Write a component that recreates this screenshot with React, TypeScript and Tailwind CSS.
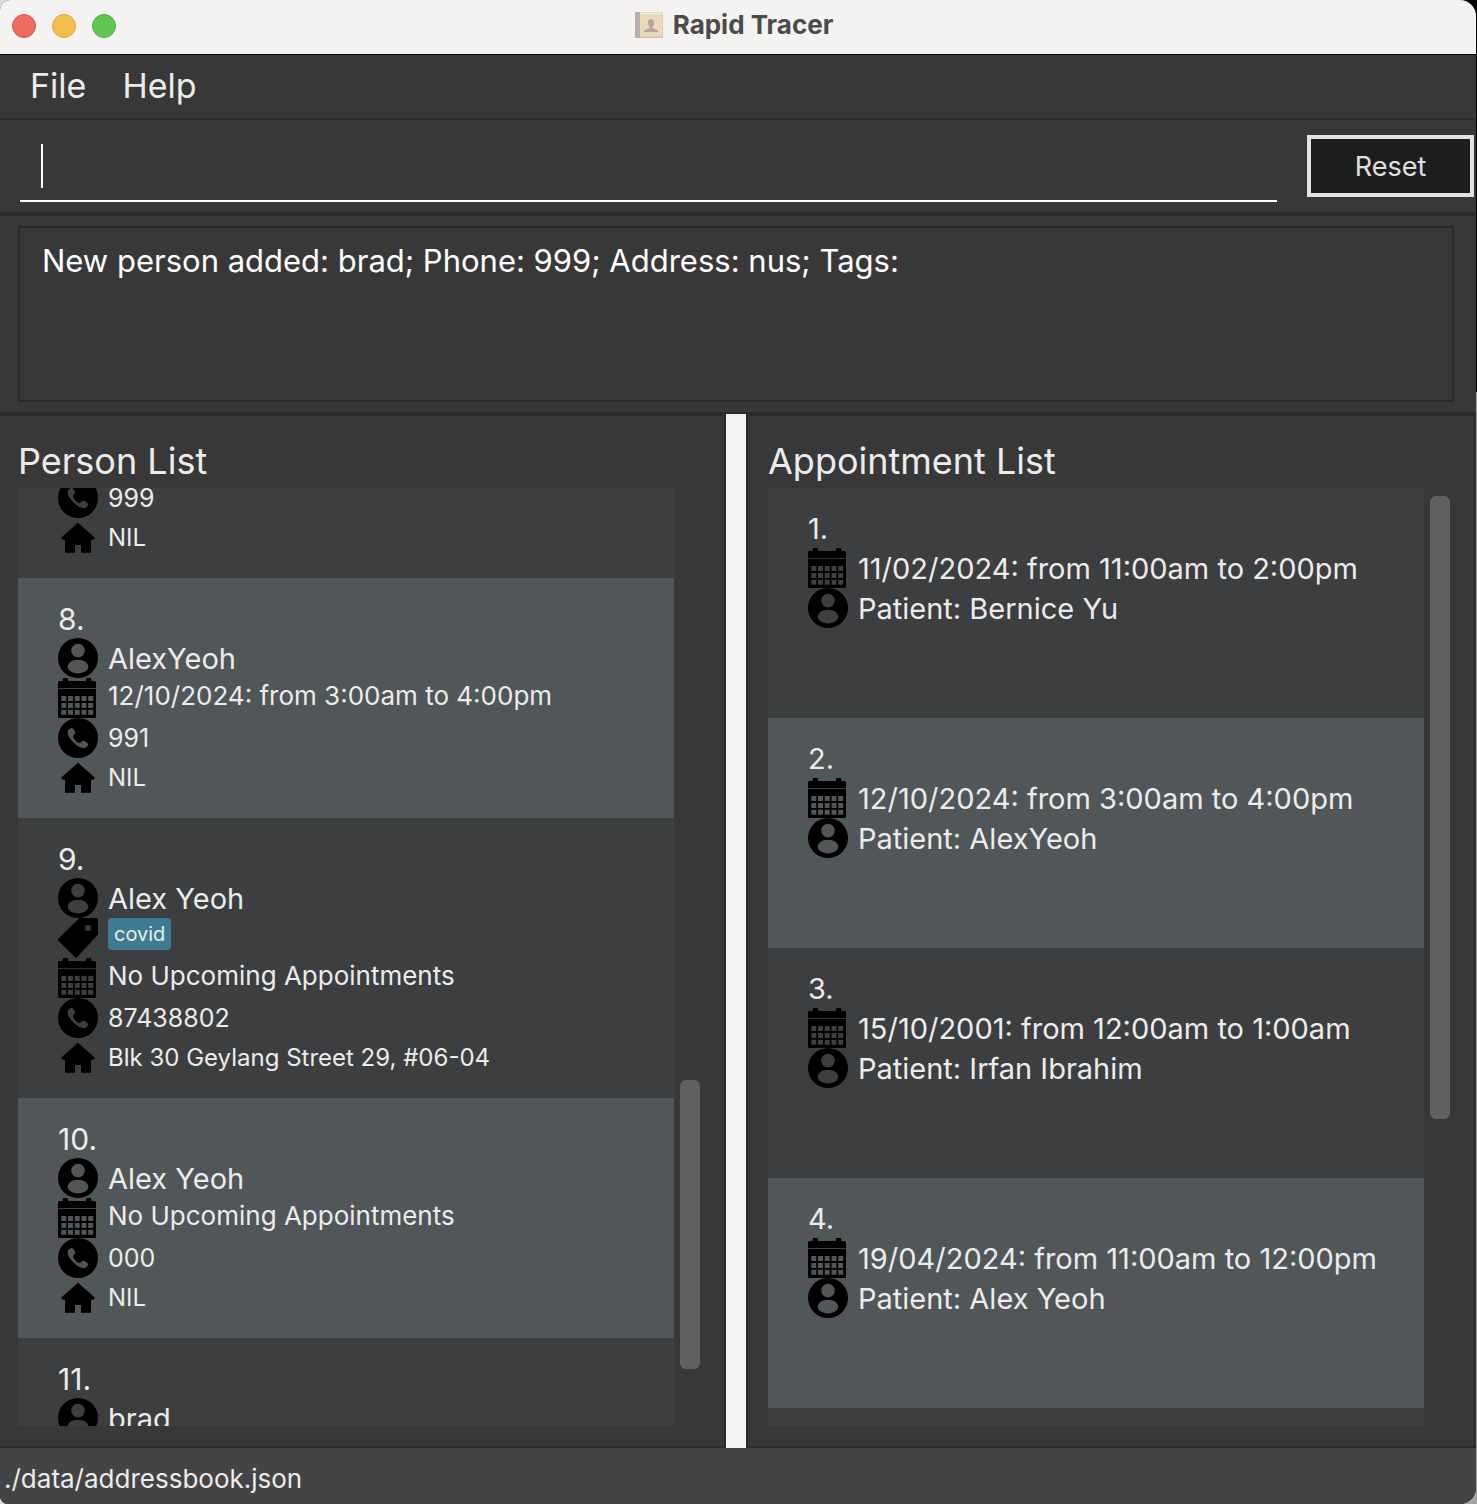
import React from "react";

type IconName = "person" | "calendar" | "phone" | "home" | "tag";

const iconPaths: Record<IconName, string> = {
  person:
    "M20 0a20 20 0 1 0 0 40a20 20 0 1 0 0-40zM20 5.800a6.800 6.800 0 1 1 0 13.600a6.800 6.800 0 1 1 0-13.600zM20 21.800c6.500 0 10.300 3.400 10.300 7c0 3.600-4.600 6.600-10.300 6.600s-10.300-3-10.300-6.600c0-3.600 3.800-7 10.300-7z",
  calendar:
    "M0 4.500q0-1.500 1.500-1.500h3.200v-2q0-1 1-1h3.300q1 0 1 1v2h18v-2q0-1 1-1h3.300q1 0 1 1v2h3.200q1.500 0 1.500 1.500v5.700h-38zM0 11.100h38v27.400q0 1.500-1.500 1.500h-35q-1.500 0-1.500-1.500zM3.300 18v5h5v-5zM10 18v5h5v-5zM16.700 18v5h5v-5zM23.500 18v5h5v-5zM30.200 18v5h5v-5zM3.300 25v5h5v-5zM10 25v5h5v-5zM16.700 25v5h5v-5zM23.500 25v5h5v-5zM30.200 25v5h5v-5zM3.300 31.700v5h5v-5zM10 31.700v5h5v-5zM16.700 31.700v5h5v-5zM23.500 31.700v5h5v-5zM30.200 31.700v5h5v-5z",
  phone:
    "M20 0a20 20 0 1 0 0 40a20 20 0 1 0 0-40zM10 12.600C11 11.300 13 9.600 14 10.100C15.500 10.800 17 13 17.300 14.500C17.300 16 15 17 15 18.500C15.500 21 19 24.500 21.500 25C23 25 24 22.600 25.500 22.800C27 23 29.500 25 30 26C30.500 27 29 29 27.500 29.800C25 31 20 29 16 25C11.500 20.500 8.500 16 10 12.600Z",
  home: "M20 4.700L37 19.800L35.300 21.700H33V34.700H23V27H17V34.700H7V21.700H4.700L3 19.800Z",
  tag: "M21.500 0H37.500Q40 0 40 2.500V16.500L19.200 39Q18 40.300 16.800 39L.5 22.700Q-.5 21.500 .5 20.500ZM30 7a3 3 0 1 0 0 6a3 3 0 1 0 0-6z",
};

function Icon({ name }: { name: IconName }) {
  return (
    <svg viewBox="0 0 40 40" className="size-10 shrink-0 fill-black" aria-hidden="true">
      <path fillRule="evenodd" d={iconPaths[name]} />
    </svg>
  );
}

function Row({ icon, children }: { icon: IconName; children: React.ReactNode }) {
  return (
    <div className="flex h-10 gap-2.5 whitespace-nowrap">
      <Icon name={icon} />
      {children}
    </div>
  );
}

type Person = {
  index?: number;
  name?: string;
  tag?: string;
  appointment?: string;
  phone?: string;
  address?: string;
};

const people: Person[] = [
  { phone: "999", address: "NIL" },
  { index: 8, name: "AlexYeoh", appointment: "12/10/2024: from 3:00am to 4:00pm", phone: "991", address: "NIL" },
  {
    index: 9,
    name: "Alex Yeoh",
    tag: "covid",
    appointment: "No Upcoming Appointments",
    phone: "87438802",
    address: "Blk 30 Geylang Street 29, #06-04",
  },
  { index: 10, name: "Alex Yeoh", appointment: "No Upcoming Appointments", phone: "000", address: "NIL" },
  { index: 11, name: "brad" },
];

const appointments = [
  { index: 1, time: "11/02/2024: from 11:00am to 2:00pm", patient: "Bernice Yu" },
  { index: 2, time: "12/10/2024: from 3:00am to 4:00pm", patient: "AlexYeoh" },
  { index: 3, time: "15/10/2001: from 12:00am to 1:00am", patient: "Irfan Ibrahim" },
  { index: 4, time: "19/04/2024: from 11:00am to 12:00pm", patient: "Alex Yeoh" },
];

function PersonCard({ person }: { person: Person }) {
  return (
    <li className="bg-[#3c3e3f] px-10 pb-5 even:bg-[#515658]">
      {person.index && <div className="pt-5 text-[30px] leading-[42px] -mb-0.5">{person.index}.</div>}
      {person.name && (
        <Row icon="person">
          <span className="text-[29px] leading-[42px]">{person.name}</span>
        </Row>
      )}
      {person.tag && (
        <Row icon="tag">
          <span className="h-8 rounded-sm bg-[#3e7b91] px-1.5 text-[20px] leading-8">{person.tag}</span>
        </Row>
      )}
      {person.appointment && (
        <Row icon="calendar">
          <span className="text-[26px] leading-9">{person.appointment}</span>
        </Row>
      )}
      {person.phone && (
        <Row icon="phone">
          <span className="text-[25px] leading-10">{person.phone}</span>
        </Row>
      )}
      {person.address && (
        <Row icon="home">
          <span className="text-[24px] leading-10">{person.address}</span>
        </Row>
      )}
    </li>
  );
}

export default function App() {
  return (
    <div className="h-screen bg-[linear-gradient(90deg,#d8d8d8_20px,transparent_20px),linear-gradient(#000_392px,#a5a5a5_392px)] pr-px font-['Inter',sans-serif] text-[#ececec]">
      <div className="flex h-full flex-col overflow-hidden rounded-tl-[10px] rounded-tr-2xl rounded-br-2xl rounded-bl-lg bg-[#383838]">
        <header className="relative flex h-[55px] shrink-0 items-center justify-center gap-2.5 border-b border-black bg-[#f4f3f1] pr-2 pb-1">
          <div className="absolute top-3.5 left-3 flex gap-4">
            <button aria-label="Close" className="size-6 rounded-full border border-[#d8574c] bg-[#ed6a5f]" />
            <button aria-label="Minimize" className="size-6 rounded-full border border-[#dca23c] bg-[#f5bf4f]" />
            <button aria-label="Zoom" className="size-6 rounded-full border border-[#4fab3e] bg-[#62c655]" />
          </div>
          <svg viewBox="0 0 28 26" className="h-[26px] w-7" aria-hidden="true">
            <rect width="28" height="26" rx="1" fill="#cfc5b3" />
            <rect x="5" y="1.500" width="22.500" height="23" fill="#e9dabb" />
            <rect x="5" y="0.500" width="22.500" height="1.500" fill="#f4efe4" />
            <rect width="5" height="26" rx="1" fill="#b9b0ae" />
            <path d="M9 20v-1.200c1.500-1.500 4-1.600 5.200-2.600v-1.700c-.8-1-1.200-2.500-1.200-3.900c0-2.200 1.200-3.600 3-3.600s3 1.400 3 3.600c0 1.400-.4 2.900-1.200 3.900v1.700c1.200 1 3.700 1.100 5.200 2.600v1.200z" fill="#b3aa9b" />
          </svg>
          <h1 className="text-[26px] leading-8 font-bold text-[#4b4b49]">Rapid Tracer</h1>
        </header>

        <nav className="flex h-[65px] shrink-0 items-center gap-9 border-b-2 border-[#2b2b2b] px-[30px] pb-0.5 text-[34px]">
          <button>File</button>
          <button>Help</button>
        </nav>

        <form className="flex h-24 shrink-0 items-start border-b-4 border-[#2b2b2b] pr-0.5 pl-5" onSubmit={(e) => e.preventDefault()}>
          <div className="flex h-[82px] flex-1 items-center border-b-2 border-white pt-3 pl-[21px]">
            <span className="h-11 w-0.5 bg-white" />
            <input aria-label="Command" className="h-11 min-w-0 flex-1 bg-transparent text-[34px] text-white caret-transparent outline-none" />
          </div>
          <button type="reset" className="mt-[15px] ml-[30px] h-[62px] w-[167px] border-4 border-[#e2e2e2] bg-[#1d1d1d] pt-0.5 text-[27px] text-[#e0e0e0]">
            Reset
          </button>
        </form>

        <section className="h-[200px] shrink-0 border-b-4 border-[#2b2b2b] pt-2.5 pr-[22px] pb-2.5 pl-[18px]">
          <output className="block h-full border-2 border-[#2b2b2b] px-[22px] pt-2.5 text-[31px] leading-[46px] text-white">
            New person added: brad; Phone: 999; Address: nus; Tags:
          </output>
        </section>

        <main className="-mt-0.5 flex min-h-0 flex-1">
          <section className="flex min-w-0 flex-1 flex-col border-y-2 border-r-2 border-[#2b2b2b] pr-6 pb-5 pl-[18px]">
            <h2 className="pt-5 pb-0.5 text-[36px] leading-[50px]">Person List</h2>
            <div className="flex min-h-0 flex-1 gap-1.5">
              <div className="min-w-0 flex-1 overflow-hidden bg-[#3c3e3f]">
                <ul className="-mt-2.5">
                  {people.map((p, i) => (
                    <PersonCard key={i} person={p} />
                  ))}
                </ul>
              </div>
              <div className="flex w-5 flex-col pb-[57px]">
                <div className="mt-auto h-[289px] rounded-md bg-[#606060]" />
              </div>
            </div>
          </section>

          <div className="w-5 shrink-0 bg-[#f4f4f4]" />

          <section className="flex min-w-0 flex-1 flex-col border-2 border-[#2b2b2b] pr-6 pb-5 pl-5">
            <h2 className="pt-5 pb-0.5 text-[36px] leading-[50px]">Appointment List</h2>
            <div className="flex min-h-0 flex-1 gap-1.5">
              <div className="min-w-0 flex-1 overflow-hidden bg-[#3c3e3f]">
                <ul>
                  {appointments.map((a) => (
                    <li key={a.index} className="h-[230px] bg-[#3c3e3f] px-10 pt-5 text-[29px] leading-[42px] even:bg-[#515658]">
                      <div className="h-10">{a.index}.</div>
                      <Row icon="calendar">
                        <span>{a.time}</span>
                      </Row>
                      <Row icon="person">
                        <span>Patient: {a.patient}</span>
                      </Row>
                    </li>
                  ))}
                </ul>
              </div>
              <div className="w-5 pt-2">
                <div className="h-[623px] rounded-md bg-[#606060]" />
              </div>
            </div>
          </section>
        </main>

        <footer className="h-14 shrink-0 bg-[#444] px-1 pt-1 text-[26px] leading-[54px]">./data/addressbook.json</footer>
      </div>
    </div>
  );
}
